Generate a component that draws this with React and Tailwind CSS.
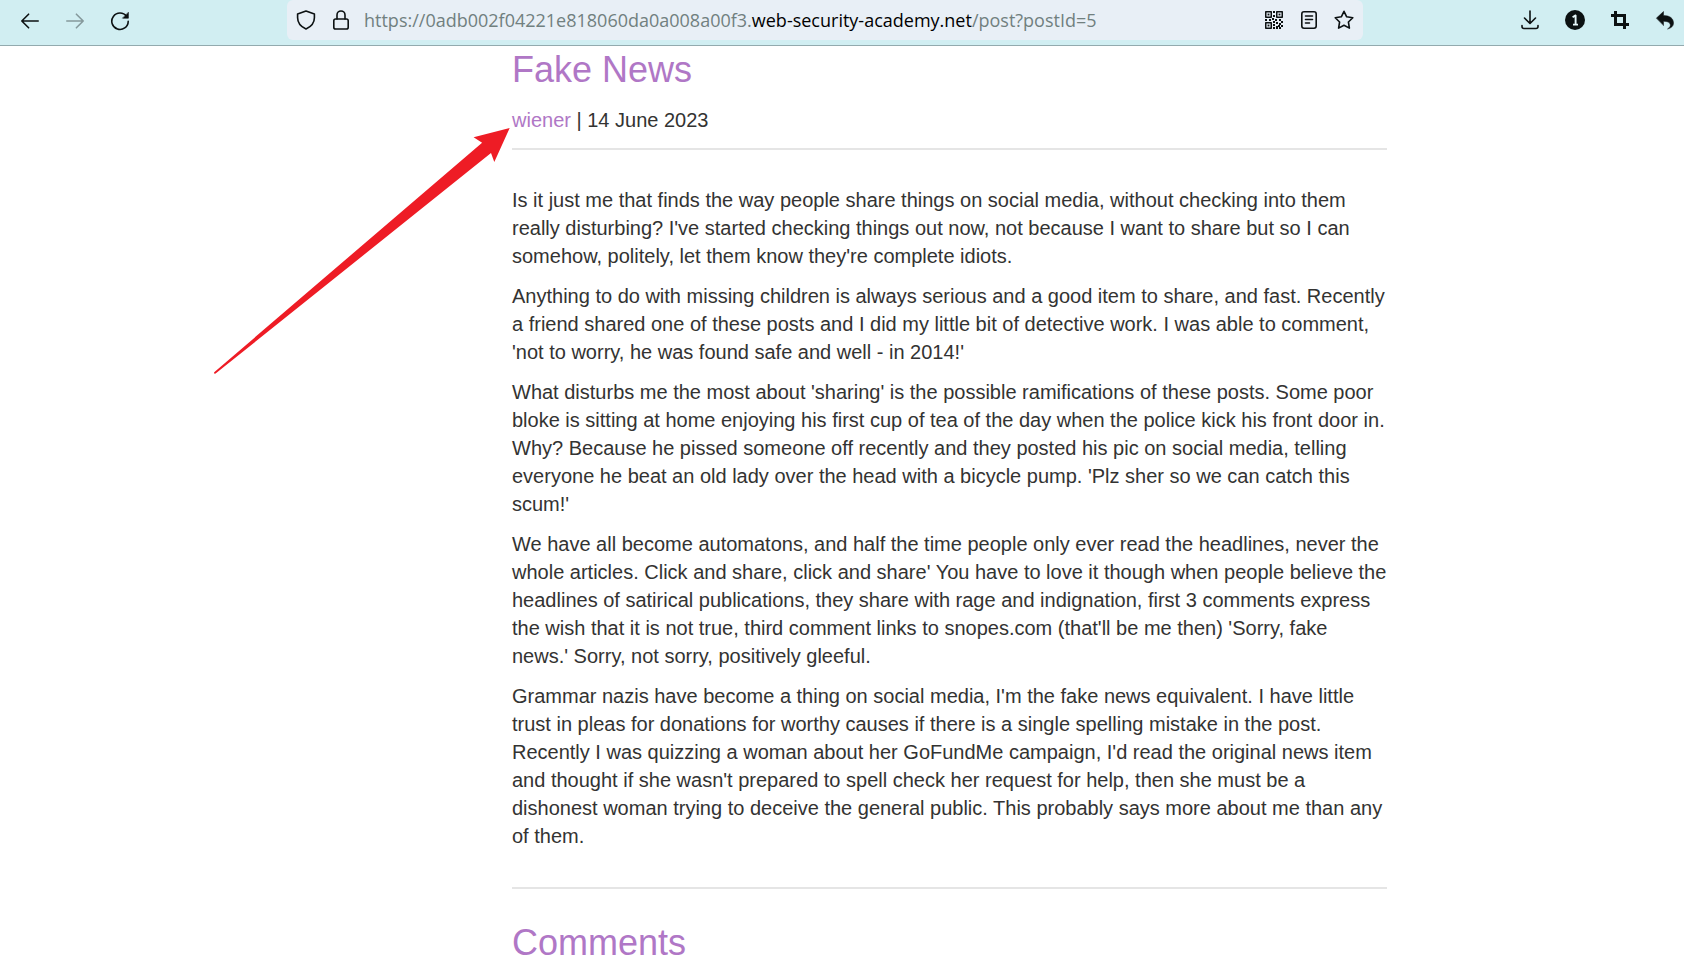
import React from "react";

const paragraphs = [
  "Is it just me that finds the way people share things on social media, without checking into them really disturbing? I've started checking things out now, not because I want to share but so I can somehow, politely, let them know they're complete idiots.",
  "Anything to do with missing children is always serious and a good item to share, and fast. Recently a friend shared one of these posts and I did my little bit of detective work. I was able to comment, 'not to worry, he was found safe and well - in 2014!'",
  "What disturbs me the most about 'sharing' is the possible ramifications of these posts. Some poor bloke is sitting at home enjoying his first cup of tea of the day when the police kick his front door in. Why? Because he pissed someone off recently and they posted his pic on social media, telling everyone he beat an old lady over the head with a bicycle pump. 'Plz sher so we can catch this scum!'",
  "We have all become automatons, and half the time people only ever read the headlines, never the whole articles. Click and share, click and share' You have to love it though when people believe the headlines of satirical publications, they share with rage and indignation, first 3 comments express the wish that it is not true, third comment links to snopes.com (that'll be me then) 'Sorry, fake news.' Sorry, not sorry, positively gleeful.",
  "Grammar nazis have become a thing on social media, I'm the fake news equivalent. I have little trust in pleas for donations for worthy causes if there is a single spelling mistake in the post. Recently I was quizzing a woman about her GoFundMe campaign, I'd read the original news item and thought if she wasn't prepared to spell check her request for help, then she must be a dishonest woman trying to deceive the general public. This probably says more about me than any of them.",
];

function Icon({ children }) {
  return (
    <svg
      className="size-5"
      viewBox="0 0 20 20"
      fill="none"
      stroke="currentColor"
      strokeWidth="1.6"
      strokeLinecap="round"
      strokeLinejoin="round"
      aria-hidden="true"
    >
      {children}
    </svg>
  );
}

function IconButton({ label, children, disabled }) {
  return (
    <button type="button" aria-label={label} disabled={disabled} className="shrink-0 disabled:text-[#85999c]">
      <Icon>{children}</Icon>
    </button>
  );
}

function QrFinder({ x, y }) {
  return (
    <g transform={`translate(${x} ${y})`}>
      <rect x="0.75" y="0.75" width="5.5" height="5.5" strokeWidth="1.5" />
      <rect x="2.6" y="2.6" width="1.8" height="1.8" fill="currentColor" stroke="none" />
    </g>
  );
}

function Toolbar() {
  return (
    <header className="flex h-[46px] items-start border-b border-[#93aaae] bg-[#d1eef2] text-[#0c1112]">
      <nav aria-label="Navigation" className="flex h-[41px] w-[287px] shrink-0 items-center gap-[25px] pl-5">
        <IconButton label="Back">
          <path d="M18.2 10H1.8M8.6 3.2 1.8 10l6.8 6.8" />
        </IconButton>
        <IconButton label="Forward" disabled>
          <path d="M1.8 10h16.4M11.4 3.2l6.8 6.8-6.8 6.8" />
        </IconButton>
        <IconButton label="Reload">
          <path d="M16.6 5.4A8.2 8.2 0 1 0 18.2 10.4" />
          <path d="M18.4 1.6v5.6h-5.6z" fill="currentColor" strokeWidth="0.6" />
        </IconButton>
      </nav>
      <div className="flex h-10 min-w-0 flex-1 items-center rounded-md bg-[#e8eff6] px-[9px]">
        <div className="flex shrink-0 gap-[15px]">
          <IconButton label="Tracking protection">
            <path d="M10 1 1.6 4.1v3.6c0 4.8 3 8.8 8.4 11.3 5.4-2.5 8.4-6.5 8.4-11.3V4.1z" />
          </IconButton>
          <IconButton label="Site security">
            <rect x="2.8" y="9" width="14.4" height="10" rx="1.8" />
            <path d="M6 9V5a4 4 0 0 1 8 0v4" />
          </IconButton>
        </div>
        <div
          role="textbox"
          aria-label="Address"
          contentEditable
          suppressContentEditableWarning
          spellCheck={false}
          className="ml-[13px] min-w-0 flex-1 whitespace-nowrap font-['Open_Sans','Noto_Sans',sans-serif] text-[18px] leading-6 text-[#71807f] outline-none"
        >
          https://0adb002f04221e818060da0a008a00f3.<span className="text-black">web-security-academy.net</span>
          /post?postId=5
        </div>
        <div className="flex shrink-0 gap-[15px]">
          <IconButton label="QR code">
            <QrFinder x={1} y={1} />
            <QrFinder x={12} y={1} />
            <QrFinder x={1} y={12} />
            <path
              d="M9 1h2v2H9zM9 5h2v2H9zM1 9h2v2H1zM5 9h2v2H5zM8 8h2v2H8zM11 9h2v2h-2zM15 9h2v2h-2zM17 11h2v2h-2zM9 11h2v2H9zM12 12h2v2h-2zM15 13h2v2h-2zM9 14h2v2H9zM12 16h2v3h-2zM17 15h2v2h-2zM14 15h2v2h-2zM9 17h2v2H9zM15 17h2v2h-2z"
              fill="currentColor"
              stroke="none"
            />
          </IconButton>
          <IconButton label="Reader view">
            <rect x="2.8" y="1.8" width="14.4" height="16.4" rx="2.2" />
            <path d="M6.5 6h7M6.5 9.500h7M6.500 13h4" />
          </IconButton>
          <IconButton label="Bookmark">
            <path d="m10 1.300 2.700 5.500 6.100.9-4.400 4.300 1 6.100-5.400-2.900-5.400 2.900 1-6.100L1.200 7.700l6.100-.9z" />
          </IconButton>
        </div>
      </div>
      <div className="flex h-10 w-[321px] shrink-0 items-center justify-end gap-[25px] pr-[9px]">
        <IconButton label="Downloads">
          <path d="M10 1v12M4.500 8l5.500 5.500L15.500 8M2 15.500v1a2 2 0 0 0 2 2h12a2 2 0 0 0 2-2v-1" />
        </IconButton>
        <IconButton label="Extension">
          <circle cx="10" cy="10" r="10" fill="currentColor" stroke="none" />
          <path d="M7.600 7.300 10.600 5.400v9.200M8 14.600h5" stroke="#e8f7f9" strokeWidth="1.900" strokeLinecap="butt" />
        </IconButton>
        <IconButton label="Screenshot">
          <path d="M1 5.500h13.500V19M5.500 1v13.500H19" strokeWidth="3" strokeLinecap="butt" strokeLinejoin="miter" />
        </IconButton>
        <IconButton label="Undo">
          <path
            d="M1.500 8 8.500 1.500v4c6.500 0 10 3 10 7.500 0 3-2 5-6 6 2.300-1.500 3.200-3 2.700-4.800-.6-2-2.800-2.900-6.700-2.900v4z"
            fill="currentColor"
            strokeWidth="0.500"
          />
        </IconButton>
      </div>
    </header>
  );
}

export default function App() {
  return (
    <div className="relative min-h-screen overflow-hidden bg-white">
      <Toolbar />
      <main className="pl-[512px] pr-[297px] font-['Liberation_Sans',Arial,sans-serif] text-[20px] leading-7 text-[#333332]">
        <h1 className="pt-1 text-[36px] leading-10 text-[#b077c6]">Fake News</h1>
        <p className="mt-4">
          <a href="#wiener" className="text-[#b077c6]">wiener</a> | 14 June 2023
        </p>
        <hr className="mt-[14px] border-t-2 border-[#e5e5e5]" />
        <article className="mt-9 space-y-3">
          {paragraphs.map((text) => (
            <p key={text}>{text}</p>
          ))}
        </article>
        <hr className="mt-[37px] border-t-2 border-[#e5e5e5]" />
        <h2 className="mt-[34px] text-[36px] leading-10 text-[#b077c6]">Comments</h2>
      </main>
      <svg
        className="pointer-events-none absolute left-[213px] top-[127px] h-[248px] w-[298px]"
        viewBox="213 127 298 248"
        aria-hidden="true"
      >
        <path
          d="M509.700 128 473.600 137.300 482.100 142.700 214.200 372.200Q213.500 374 215.600 373.600L491 153 494.300 162Z"
          fill="#ee1c25"
        />
      </svg>
    </div>
  );
}
